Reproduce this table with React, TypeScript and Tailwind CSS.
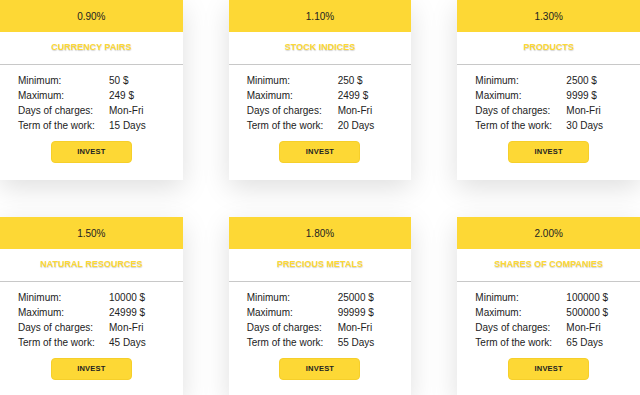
import React from 'react';

type Plan = {
  rate: string;
  title: string;
  min: string;
  max: string;
  term: string;
};

const plans: Plan[] = [
  { rate: '0.90%', title: 'CURRENCY PAIRS', min: '50 $', max: '249 $', term: '15 Days' },
  { rate: '1.10%', title: 'STOCK INDICES', min: '250 $', max: '2499 $', term: '20 Days' },
  { rate: '1.30%', title: 'PRODUCTS', min: '2500 $', max: '9999 $', term: '30 Days' },
  { rate: '1.50%', title: 'NATURAL RESOURCES', min: '10000 $', max: '24999 $', term: '45 Days' },
  { rate: '1.80%', title: 'PRECIOUS METALS', min: '25000 $', max: '99999 $', term: '55 Days' },
  { rate: '2.00%', title: 'SHARES OF COMPANIES', min: '100000 $', max: '500000 $', term: '65 Days' },
];

const PlanCard: React.FC<{ plan: Plan }> = ({ plan }) => {
  const rows = [
    ['Minimum:', plan.min],
    ['Maximum:', plan.max],
    ['Days of charges:', 'Mon-Fri'],
    ['Term of the work:', plan.term],
  ];

  return (
    <div className="bg-white shadow-[0_8px_26px_rgba(0,0,0,0.13)] pb-[17px]">
      <div className="h-8 bg-[#fdd835] flex items-center justify-center text-[10px] text-[#222]">
        {plan.rate}
      </div>
      <div className="h-[33px] flex items-center justify-center border-b border-[#c8c8c8] text-[9px] font-bold text-[#fdd835] [text-shadow:0_1px_1px_rgba(0,0,0,0.18)]">
        {plan.title}
      </div>
      <div className="pt-2 px-[18px]">
        {rows.map(([label, value]) => (
          <div key={label} className="flex h-[15px] items-center text-[10px] text-[#222]">
            <span className="w-[91px] shrink-0">{label}</span>
            <span>{value}</span>
          </div>
        ))}
      </div>
      <div className="flex justify-center mt-2">
        <button className="w-[81px] h-[22px] rounded-[4px] bg-[#fdd835] border border-[#f6cf2a] text-[7.5px] font-bold text-[#222] tracking-[0.2px]">
          INVEST
        </button>
      </div>
    </div>
  );
};

const App: React.FC = () => {
  return (
    <div
      className="w-[640px] h-[395px] overflow-hidden bg-white"
      style={{ fontFamily: '"Liberation Sans", Arial, sans-serif' }}
    >
      <div className="grid grid-cols-3 gap-x-[46px] gap-y-[37px]">
        {plans.map((p) => (
          <PlanCard key={p.title} plan={p} />
        ))}
      </div>
    </div>
  );
};

export default App;
